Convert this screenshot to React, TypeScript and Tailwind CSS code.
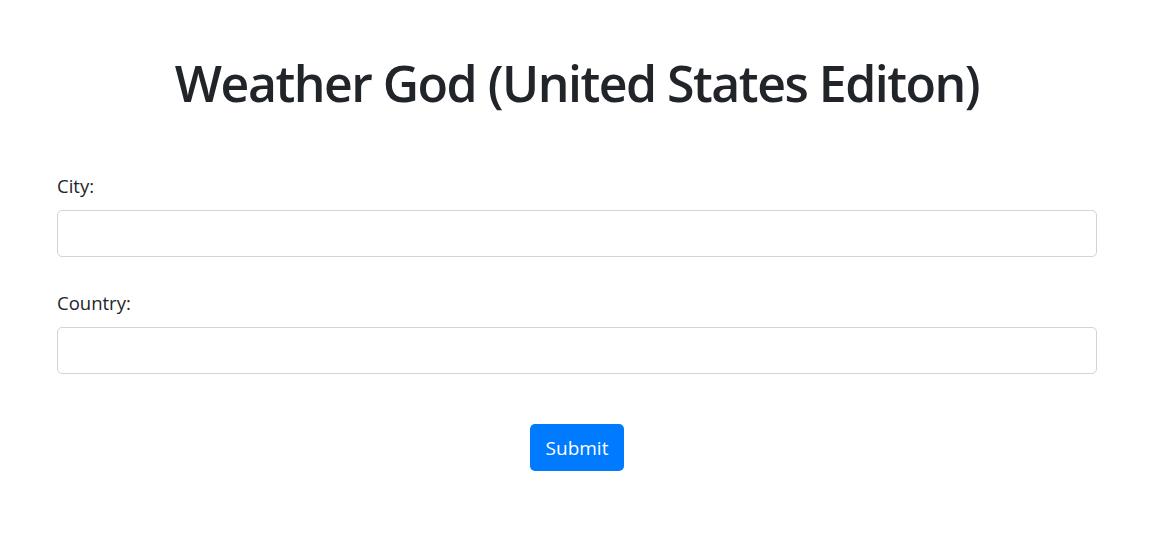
import React from "react";

export default function App() {
  return (
    <div
      className="min-h-[547px] w-[1175px] bg-white text-[#212529]"
      style={{ fontFamily: '"Open Sans", "Noto Sans", "Liberation Sans", sans-serif' }}
    >
      <div className="w-[1154px] pt-[53px]">
        <h1 className="text-center text-[50px] font-semibold leading-[60px] tracking-[-1.5px]">
          Weather God (United States Editon)
        </h1>
        <form className="ml-[57px] mt-[58px] w-[1040px]" onSubmit={(e) => e.preventDefault()}>
          <div className="mb-[31px]">
            <label className="mb-[9px] block text-[18.5px] leading-[30px]">City:</label>
            <input
              type="text"
              className="block h-[47px] w-full rounded-[5px] border border-[#ced4da] bg-white px-[15px] text-[20px] outline-none"
            />
          </div>
          <div>
            <label className="mb-[9px] block text-[18.5px] leading-[30px]">Country:</label>
            <input
              type="text"
              className="block h-[47px] w-full rounded-[5px] border border-[#ced4da] bg-white px-[15px] text-[20px] outline-none"
            />
          </div>
          <div className="mt-[50px] flex justify-center">
            <button
              type="submit"
              className="h-[47px] w-[94px] rounded-[5px] bg-[#007bff] text-[19px] leading-[30px] text-white"
            >
              Submit
            </button>
          </div>
        </form>
      </div>
    </div>
  );
}
